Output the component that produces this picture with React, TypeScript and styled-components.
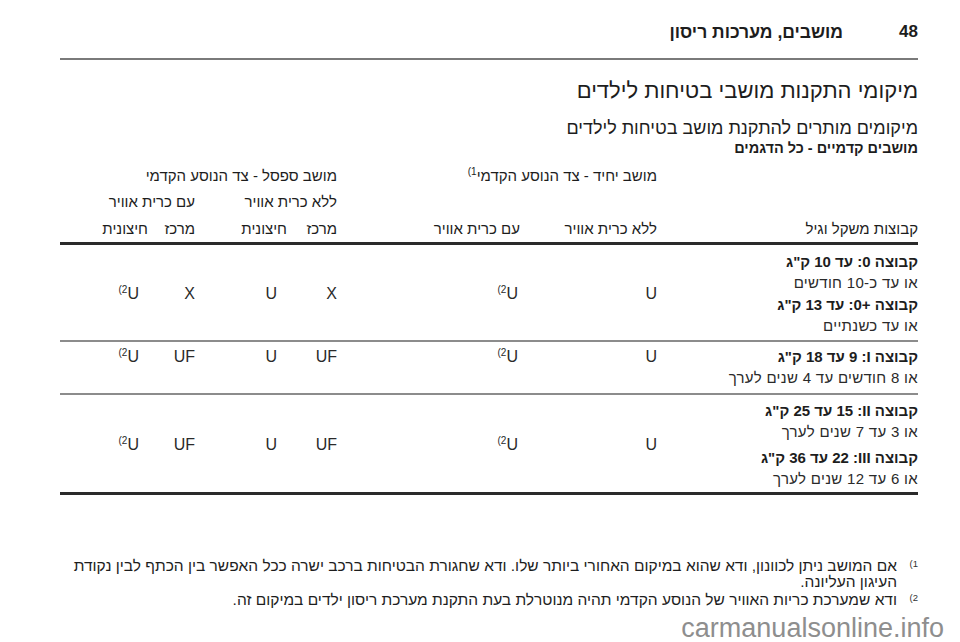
import styled, { createGlobalStyle } from "styled-components";

const GlobalStyle = createGlobalStyle`
  html, body {
    margin: 0;
    padding: 0;
    background: #fff;
  }
  body {
    font-family: "Liberation Sans", Arial, "DejaVu Sans", sans-serif;
    color: #1d1d1d;
  }
`;

const COLS = "261px 137px 183px 50px 92px 47px 88px";

const Page = styled.div`
  position: relative;
  width: 960px;
  height: 642px;
  overflow: hidden;
  box-sizing: border-box;
  padding: 0 42px 0 60px;
  direction: rtl;
`;

const RunningHead = styled.header`
  display: flex;
  align-items: flex-start;
  gap: 56px;
  height: 60px;
  padding-top: 22px;
  box-sizing: border-box;
  border-bottom: 2px solid #7a7a7a;
  font-size: 17.5px;
  line-height: 20px;
  font-weight: bold;
`;

const PageNo = styled.span`
  font-size: 17px;
`;

const Chapter = styled.span``;

const Title = styled.h1`
  margin: 18px 0 0;
  font-size: 22px;
  line-height: 26px;
  font-weight: normal;
`;

const Subtitle = styled.h2`
  margin: 14px 0 0;
  font-size: 18px;
  line-height: 20px;
  font-weight: normal;
`;

const Caption = styled.h3`
  margin: 2px 0 0;
  font-size: 14.5px;
  line-height: 16px;
  font-weight: bold;
`;

const HeadGrid = styled.div`
  margin-top: 6px;
  display: grid;
  grid-template-columns: ${COLS};
  grid-auto-rows: 26.5px;
  align-items: center;
  font-size: 15px;
  border-bottom: 3px solid #2a2a2a;
`;

const HeadCell = styled.div<{ $col: number; $span?: number; $row: number }>`
  grid-column: ${(p) => p.$col} / span ${(p) => p.$span ?? 1};
  grid-row: ${(p) => p.$row};
  white-space: nowrap;
`;

const Row = styled.div<{ $pad: string; $last?: boolean }>`
  display: grid;
  grid-template-columns: ${COLS};
  padding: ${(p) => p.$pad};
  border-bottom: ${(p) => (p.$last ? "3px solid #2a2a2a" : "2px solid #8c8c8c")};
`;

const Group = styled.div`
  font-size: 15px;
  line-height: 21.5px;
`;

const GroupTitle = styled.div<{ $gap?: boolean }>`
  font-weight: bold;
  margin-top: ${(p) => (p.$gap ? "4px" : "0")};
`;

const GroupNote = styled.div`
  color: #2a2a2a;
  letter-spacing: 0.3px;
`;

const Value = styled.div<{ $inset?: number; $top?: boolean }>`
  align-self: ${(p) => (p.$top ? "start" : "center")};
  padding-right: ${(p) => p.$inset ?? 0}px;
  font-size: 16px;
  line-height: 21.5px;
  color: #2a2a2a;
`;

const Sup = styled.sup`
  font-size: 10px;
  vertical-align: 6px;
  line-height: 0;
`;

const Notes = styled.ol`
  list-style: none;
  margin: 63px 0 0;
  padding: 0;
  font-size: 15.5px;
  line-height: 16px;
`;

const Note = styled.li`
  display: flex;
  margin-bottom: 2px;
`;

const Mark = styled.span`
  flex: 0 0 21px;
  font-size: 9.5px;
  line-height: 12px;
  text-align: right;
  color: #333;
`;

const Watermark = styled.div`
  position: absolute;
  right: 16px;
  bottom: 0;
  direction: ltr;
  font-family: "Liberation Sans", Arial, sans-serif;
  font-size: 27px;
  line-height: 1;
  color: #8e8e8e;
`;

type Cell = { text: string; sup?: boolean };

const rows: {
  groups: { title: string; note: string; gap?: boolean }[];
  values: Cell[];
  top?: boolean;
  pad: string;
}[] = [
  {
    groups: [
      { title: "קבוצה 0: עד 10 ק\"ג", note: "או עד כ-10 חודשים" },
      { title: "קבוצה +0: עד 13 ק\"ג", note: "או עד כשנתיים" },
    ],
    values: [
      { text: "U" },
      { text: "U", sup: true },
      { text: "X" },
      { text: "U" },
      { text: "X" },
      { text: "U", sup: true },
    ],
    pad: "6px 0 3px",
  },
  {
    groups: [
      { title: "קבוצה I:\u200F 9 עד 18 ק\"ג", note: "או 8 חודשים עד 4 שנים לערך" },
    ],
    values: [
      { text: "U" },
      { text: "U", sup: true },
      { text: "UF" },
      { text: "U" },
      { text: "UF" },
      { text: "U", sup: true },
    ],
    top: true,
    pad: "4px 0 4px",
  },
  {
    groups: [
      { title: "קבוצה II:\u200F 15 עד 25 ק\"ג", note: "או 3 עד 7 שנים לערך" },
      { title: "קבוצה III:\u200F 22 עד 36 ק\"ג", note: "או 6 עד 12 שנים לערך", gap: true },
    ],
    values: [
      { text: "U" },
      { text: "U", sup: true },
      { text: "UF" },
      { text: "U" },
      { text: "UF" },
      { text: "U", sup: true },
    ],
    pad: "5px 0 2px",
  },
];

// values in the "חיצונית" columns sit a little in from the column edge
const insets = [0, 2, 0, 10, 0, 9];

const App = () => {
  return (
    <>
      <GlobalStyle />
      <Page>
        <RunningHead>
          <PageNo>48</PageNo>
          <Chapter>מושבים, מערכות ריסון</Chapter>
        </RunningHead>

        <Title>מיקומי התקנות מושבי בטיחות לילדים</Title>
        <Subtitle>מיקומים מותרים להתקנת מושב בטיחות לילדים</Subtitle>
        <Caption>מושבים קדמיים - כל הדגמים</Caption>

        <HeadGrid>
          <HeadCell $row={1} $col={2} $span={2}>
            מושב יחיד - צד הנוסע הקדמי<Sup>1)</Sup>
          </HeadCell>
          <HeadCell $row={1} $col={4} $span={4}>
            מושב ספסל - צד הנוסע הקדמי
          </HeadCell>
          <HeadCell $row={2} $col={4} $span={2}>
            ללא כרית אוויר
          </HeadCell>
          <HeadCell $row={2} $col={6} $span={2}>
            עם כרית אוויר
          </HeadCell>
          <HeadCell $row={3} $col={1}>
            קבוצות משקל וגיל
          </HeadCell>
          <HeadCell $row={3} $col={2}>
            ללא כרית אוויר
          </HeadCell>
          <HeadCell $row={3} $col={3}>
            עם כרית אוויר
          </HeadCell>
          <HeadCell $row={3} $col={4}>
            מרכז
          </HeadCell>
          <HeadCell $row={3} $col={5}>
            חיצונית
          </HeadCell>
          <HeadCell $row={3} $col={6}>
            מרכז
          </HeadCell>
          <HeadCell $row={3} $col={7}>
            חיצונית
          </HeadCell>
        </HeadGrid>

        {rows.map((r, i) => (
          <Row key={i} $pad={r.pad} $last={i === rows.length - 1}>
            <Group>
              {r.groups.map((g) => (
                <div key={g.title}>
                  <GroupTitle $gap={g.gap}>{g.title}</GroupTitle>
                  <GroupNote>{g.note}</GroupNote>
                </div>
              ))}
            </Group>
            {r.values.map((v, j) => (
              <Value key={j} $inset={insets[j]} $top={r.top}>
                <span dir="ltr">
                  {v.sup && <Sup>(2</Sup>}
                  {v.text}
                </span>
              </Value>
            ))}
          </Row>
        ))}

        <Notes>
          <Note>
            <Mark dir="ltr">(1</Mark>
            <span>
              אם המושב ניתן לכוונון, ודא שהוא במיקום האחורי ביותר שלו. ודא
              שחגורת הבטיחות ברכב ישרה ככל האפשר בין הכתף לבין נקודת העיגון
              העליונה.
            </span>
          </Note>
          <Note>
            <Mark dir="ltr">(2</Mark>
            <span>
              ודא שמערכת כריות האוויר של הנוסע הקדמי תהיה מנוטרלת בעת התקנת
              מערכת ריסון ילדים במיקום זה.
            </span>
          </Note>
        </Notes>

        <Watermark>carmanualsonline.info</Watermark>
      </Page>
    </>
  );
};

export default App;
